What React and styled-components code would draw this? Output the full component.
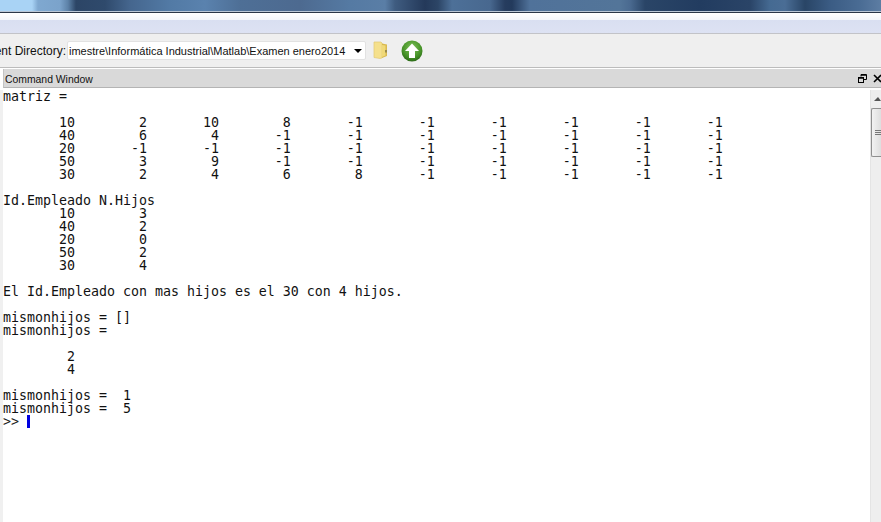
import React from 'react'
import styled, { createGlobalStyle } from 'styled-components'

const GlobalStyle = createGlobalStyle`
    html, body {
        margin: 0;
        padding: 0;
        background: #fff;
    }
`

const Page = styled.div`
    width: 881px;
    height: 522px;
    overflow: hidden;
    display: flex;
    flex-direction: column;
    font-family: "Liberation Sans", Arial, sans-serif;
`

const DesktopStrip = styled.div`
    height: 11px;
    flex: none;
    background: linear-gradient(90deg,
        #a9d3f5 0, #a9d3f5 32px, #7fa8d0 38px, #7ba3cb 60px, #5d82a8 68px, #2c4566 76px, #2f4a6c 105px,
        #45668e 130px, #527aa5 170px, #5a82ae 205px, #4e6f96 240px, #4d6a90 300px, #557aa3 350px,
        #5a7ea6 385px, #3f5c80 395px, #24395a 425px, #2c4566 438px, #4d7098 452px, #48688f 490px,
        #263c5e 505px, #233a5c 512px, #50729a 530px, #537599 620px, #4a6a90 630px, #2a4567 645px,
        #223c60 700px, #2a4467 750px, #456a92 770px, #4a6d95 785px, #294566 805px, #3b5c84 830px,
        #4a6c94 860px, #5d7da3 881px);
`

const DarkRule = styled.div`
    height: 2px;
    flex: none;
    background: linear-gradient(180deg, #b9c6d6 0, #b9c6d6 50%, #2a3648 50%, #2a3648 100%);
`

const MenuBand = styled.div`
    height: 21px;
    flex: none;
    box-sizing: border-box;
    background: linear-gradient(180deg, #fff 0, #f3f5fb 7px, #d9dff1 7px, #dde2f3 100%);
    border-bottom: 1px solid #c2c3c8;
`

const Toolbar = styled.div`
    height: 34px;
    flex: none;
    box-sizing: border-box;
    padding-top: 7px;
    display: flex;
    align-items: flex-start;
    background: #efefef;
    border-bottom: 1px solid #bcbcbc;
`

const DirLabel = styled.div`
    width: 66px;
    height: 19px;
    margin-right: 1px;
    flex: none;
    display: flex;
    justify-content: flex-end;
    align-items: center;
    overflow: hidden;
    white-space: nowrap;
    font-size: 12px;
    color: #111;
`

const DirField = styled.div`
    width: 299px;
    height: 19px;
    flex: none;
    box-sizing: border-box;
    padding: 0 3px 0 1px;
    display: flex;
    justify-content: space-between;
    align-items: center;
    background: #fff;
    border: 1px solid #e2e2e2;
    border-radius: 2px;
    font-size: 11px;
    color: #111;
    white-space: nowrap;
`

const Caret = styled.span`
    width: 0;
    height: 0;
    border-left: 4px solid transparent;
    border-right: 4px solid transparent;
    border-top: 4px solid #000;
`

const FolderButton = styled.div`
    width: 16px;
    height: 18px;
    margin-left: 7px;
    flex: none;
`

const UpButton = styled.div`
    width: 22px;
    height: 22px;
    margin: -1px 0 0 12px;
    flex: none;
`

const TitleBar = styled.div`
    height: 19px;
    margin: 1px 0 2px 3px;
    flex: none;
    box-sizing: border-box;
    padding: 2px 0 0 1px;
    display: flex;
    align-items: center;
    justify-content: space-between;
    background: #d9d9d9;
    border-left: 1px solid #c4c4c4;
    border-bottom: 1px solid #b4b4b4;
    font-size: 10.4px;
    color: #111;
`

const TitleIcons = styled.div`
    display: flex;
    align-items: center;
    gap: 6px;
    margin: -2px -1px 0 0;
`

const Body = styled.div`
    flex: 1;
    min-height: 0;
    display: flex;
    background: #fff;
`

const Gutter = styled.div`
    width: 3px;
    flex: none;
    background: #f0f0f0;
`

const Console = styled.pre`
    flex: 1;
    margin: 0;
    font-family: "DejaVu Sans Mono", "Liberation Mono", monospace;
    font-size: 13.29px;
    line-height: 13px;
    color: #111;
`

const Prompt = styled.span`
    color: #222;
`

const Cursor = styled.span`
    display: inline-block;
    width: 3px;
    height: 13px;
    vertical-align: top;
    background: #0000e0;
`

const ScrollBar = styled.div`
    width: 10px;
    flex: none;
    display: flex;
    flex-direction: column;
    background: #eeeeee;
    border-left: 1px solid #e4e4e4;
`

const ScrollUp = styled.div`
    height: 18px;
    flex: none;
    display: flex;
    justify-content: flex-end;
    padding-top: 7px;
    box-sizing: border-box;
`

const ScrollUpArrow = styled.span`
    width: 0;
    height: 0;
    border-left: 4px solid transparent;
    border-right: 3px solid transparent;
    border-bottom: 4px solid #555;
`

const ScrollThumb = styled.div`
    height: 49px;
    flex: none;
    box-sizing: border-box;
    display: flex;
    flex-direction: column;
    justify-content: center;
    gap: 1px;
    padding-left: 3px;
    background: linear-gradient(90deg, #f2f2f2, #dedede);
    border: 1px solid #8f8f8f;
    border-right: none;
    border-radius: 2px 0 0 2px;
`

const Grip = styled.span`
    height: 1px;
    background: #777;
`

const FolderIcon = () => (
    <svg width="16" height="18" viewBox="0 0 16 18">
        <path d="M1 1h7l1 1v15l-2 0.5-6-1z" fill="#f5e08c" stroke="#e2c873" strokeWidth="0.7" />
        <path d="M9 2.5l5 1v11.5l-5 2z" fill="#d9b94f" />
        <path d="M9 4l3.5 0.6v10l-3.5 1.4z" fill="#f0d978" />
        <rect x="12" y="9" width="2" height="2.5" fill="#9a8a4a" />
    </svg>
)

const UpIcon = () => (
    <svg width="22" height="22" viewBox="0 0 22 22">
        <defs>
            <radialGradient id="upFill" cx="50%" cy="35%" r="65%">
                <stop offset="0" stopColor="#7fc35a" />
                <stop offset="0.7" stopColor="#459127" />
                <stop offset="1" stopColor="#2c6a18" />
            </radialGradient>
        </defs>
        <circle cx="11" cy="11" r="10.5" fill="url(#upFill)" />
        <path d="M11 3.5L18 11h-4v7H8v-7H4z" fill="#fff" />
    </svg>
)

const RestoreIcon = () => (
    <svg width="9" height="9" viewBox="0 0 9 9">
        <path d="M3 2.5V0.5H8.5V5.5H6" fill="none" stroke="#000" />
        <path d="M3 1H8" stroke="#000" strokeWidth="1.5" />
        <rect x="0.5" y="3.5" width="5" height="5" fill="none" stroke="#000" />
        <path d="M0 4H6" stroke="#000" strokeWidth="1.5" />
    </svg>
)

const CloseIcon = () => (
    <svg width="9" height="9" viewBox="0 0 9 9">
        <path d="M1 1L8 8M8 1L1 8" stroke="#000" strokeWidth="1.6" />
    </svg>
)

const output = `matriz =

       10        2       10        8       -1       -1       -1       -1       -1       -1
       40        6        4       -1       -1       -1       -1       -1       -1       -1
       20       -1       -1       -1       -1       -1       -1       -1       -1       -1
       50        3        9       -1       -1       -1       -1       -1       -1       -1
       30        2        4        6        8       -1       -1       -1       -1       -1

Id.Empleado N.Hijos
       10        3
       40        2
       20        0
       50        2
       30        4

El Id.Empleado con mas hijos es el 30 con 4 hijos.

mismonhijos = []
mismonhijos =

        2
        4

mismonhijos =  1
mismonhijos =  5
`

export default function App() {
    return (
        <Page>
            <GlobalStyle />
            <DesktopStrip />
            <DarkRule />
            <MenuBand />
            <Toolbar>
                <DirLabel>Current Directory:</DirLabel>
                <DirField>
                    <span>imestre\Informática Industrial\Matlab\Examen enero2014</span>
                    <Caret />
                </DirField>
                <FolderButton><FolderIcon /></FolderButton>
                <UpButton><UpIcon /></UpButton>
            </Toolbar>
            <TitleBar>
                <span>Command Window</span>
                <TitleIcons>
                    <RestoreIcon />
                    <CloseIcon />
                </TitleIcons>
            </TitleBar>
            <Body>
                <Gutter />
                <Console>{output}<Prompt>{'>> '}</Prompt><Cursor /></Console>
                <ScrollBar>
                    <ScrollUp><ScrollUpArrow /></ScrollUp>
                    <ScrollThumb>
                        <Grip />
                        <Grip />
                        <Grip />
                    </ScrollThumb>
                </ScrollBar>
            </Body>
        </Page>
    )
}
